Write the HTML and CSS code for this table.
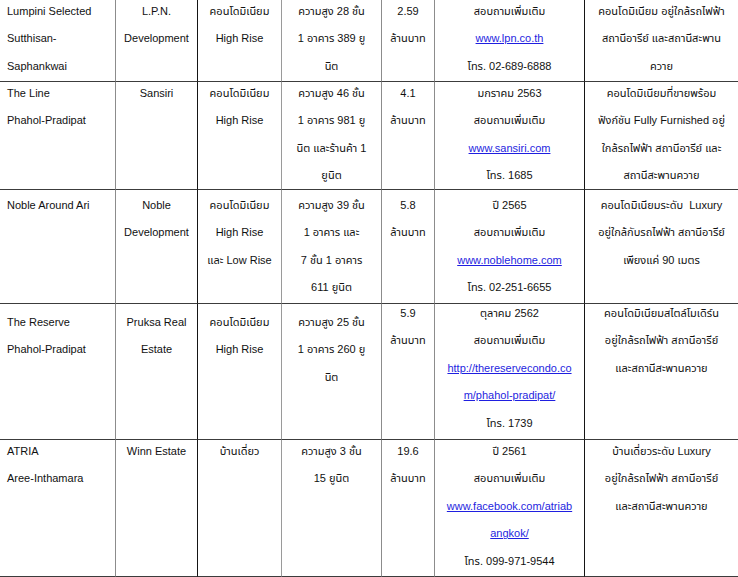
FILE: index.html
```html
<!DOCTYPE html>
<html lang="th">
<head>
<meta charset="utf-8">
<title>Condo table</title>
<link rel="stylesheet" href="styles.css">
</head>
<body>
<table class="grid">
<colgroup>
<col class="w1"><col class="w2"><col class="w3"><col class="w4"><col class="w5"><col class="w6"><col class="w7">
</colgroup>
<tbody>
<tr class="r1">
<td class="c1"><div class="in">Lumpini Selected<br>Sutthisan-<br>Saphankwai</div></td>
<td class="c2"><div class="in">L.P.N.<br>Development</div></td>
<td class="c3"><div class="in">คอนโดมิเนียม<br>High Rise</div></td>
<td class="c4"><div class="in">ความสูง 28 ชั้น<br>1 อาคาร 389 ยู<br>นิต</div></td>
<td class="c5"><div class="in">2.59<br>ล้านบาท</div></td>
<td class="c6"><div class="in">สอบถามเพิ่มเติม<br><a class="lnk" href="#">www.lpn.co.th</a><br>โทร. 02-689-6888</div></td>
<td class="c7"><div class="in">คอนโดมิเนียม อยู่ใกล้รถไฟฟ้า<br>สถานีอารีย์ และสถานีสะพาน<br>ควาย</div></td>
</tr>
<tr class="r2">
<td class="c1"><div class="in">The Line<br>Phahol-Pradipat</div></td>
<td class="c2"><div class="in">Sansiri</div></td>
<td class="c3"><div class="in">คอนโดมิเนียม<br>High Rise</div></td>
<td class="c4"><div class="in">ความสูง 46 ชั้น<br>1 อาคาร 981 ยู<br>นิต และร้านค้า 1<br>ยูนิต</div></td>
<td class="c5"><div class="in">4.1<br>ล้านบาท</div></td>
<td class="c6"><div class="in">มกราคม 2563<br>สอบถามเพิ่มเติม<br><a class="lnk" href="#">www.sansiri.com</a><br>โทร. 1685</div></td>
<td class="c7"><div class="in">คอนโดมิเนียมที่ขายพร้อม<br>ฟังก์ชัน Fully Furnished อยู่<br>ใกล้รถไฟฟ้า สถานีอารีย์ และ<br>สถานีสะพานควาย</div></td>
</tr>
<tr class="r3">
<td class="c1"><div class="in">Noble Around Ari</div></td>
<td class="c2"><div class="in">Noble<br>Development</div></td>
<td class="c3"><div class="in">คอนโดมิเนียม<br>High Rise<br>และ Low Rise</div></td>
<td class="c4"><div class="in">ความสูง 39 ชั้น<br>1 อาคาร และ<br>7 ชั้น 1 อาคาร<br>611 ยูนิต</div></td>
<td class="c5"><div class="in">5.8<br>ล้านบาท</div></td>
<td class="c6"><div class="in">ปี 2565<br>สอบถามเพิ่มเติม<br><a class="lnk" href="#">www.noblehome.com</a><br>โทร. 02-251-6655</div></td>
<td class="c7"><div class="in">คอนโดมิเนียมระดับ&nbsp; Luxury<br>อยู่ใกล้กับรถไฟฟ้า สถานีอารีย์<br>เพียงแค่ 90 เมตร</div></td>
</tr>
<tr class="r4">
<td class="c1 low"><div class="in">The Reserve<br>Phahol-Pradipat</div></td>
<td class="c2 low"><div class="in">Pruksa Real<br>Estate</div></td>
<td class="c3 low"><div class="in">คอนโดมิเนียม<br>High Rise</div></td>
<td class="c4 low"><div class="in">ความสูง 25 ชั้น<br>1 อาคาร 260 ยู<br>นิต</div></td>
<td class="c5"><div class="in up">5.9<br>ล้านบาท</div></td>
<td class="c6"><div class="in up">ตุลาคม 2562<br>สอบถามเพิ่มเติม<br><a class="lnk" href="#">http://thereservecondo.co<br>m/phahol-pradipat/</a><br>โทร. 1739</div></td>
<td class="c7"><div class="in up">คอนโดมิเนียมสไตล์โมเดิร์น<br>อยู่ใกล้รถไฟฟ้า สถานีอารีย์<br>และสถานีสะพานควาย</div></td>
</tr>
<tr class="r5">
<td class="c1"><div class="in">ATRIA<br>Aree-Inthamara</div></td>
<td class="c2"><div class="in">Winn Estate</div></td>
<td class="c3"><div class="in">บ้านเดี่ยว</div></td>
<td class="c4"><div class="in">ความสูง 3 ชั้น<br>15 ยูนิต</div></td>
<td class="c5"><div class="in">19.6<br>ล้านบาท</div></td>
<td class="c6"><div class="in">ปี 2561<br>สอบถามเพิ่มเติม<br><a class="lnk" href="#">www.facebook.com/atriab<br>angkok/</a><br>โทร. 099-971-9544</div></td>
<td class="c7"><div class="in">บ้านเดี่ยวระดับ Luxury<br>อยู่ใกล้รถไฟฟ้า สถานีอารีย์<br>และสถานีสะพานควาย</div></td>
</tr>
</tbody>
</table>
</body>
</html>
```

FILE: styles.css
```css
html, body {
  margin: 0;
  padding: 0;
  background: #ffffff;
  overflow: hidden;
}
body {
  width: 738px;
  height: 577px;
}
.grid {
  table-layout: fixed;
  border-collapse: separate;
  border-spacing: 0;
  width: 740px;
  margin: 0 0 0 -1px;
  font-family: "Liberation Sans", "Noto Sans Thai", "Noto Sans", sans-serif;
  font-size: 11px;
  line-height: 27.4px;
  color: #111111;
}
.w1 { width: 117px; }
.w2 { width: 82px; }
.w3 { width: 84px; }
.w4 { width: 100px; }
.w5 { width: 53px; }
.w6 { width: 150px; }
.w7 { width: 154px; }
.grid td {
  box-sizing: border-box;
  padding: 0 2px;
  vertical-align: top;
  text-align: center;
  white-space: nowrap;
  overflow: hidden;
  border-bottom: 1px solid #3c3c3c;
  border-right: 1px solid #8c8c8c;
}
.in {
  margin: -2px 0;
}
.in.up {
  margin-top: -4px;
}
.grid td.c1 {
  text-align: left;
  padding-left: 8px;
}
.grid td.c2,
.grid td.c6 {
  border-right-color: #151515;
}
.grid td.c3 {
  border-right-color: #9a9a9a;
}
.r1 { height: 82px; }
.r2 { height: 108px; }
.r3 { height: 114px; }
.r4 { height: 136px; }
.r5 { height: 137px; }
.r3 td { padding-top: 4px; }
.r4 td.low { padding-top: 7px; }
.lnk {
  color: #1f1fe0;
  text-decoration: underline;
}
```
